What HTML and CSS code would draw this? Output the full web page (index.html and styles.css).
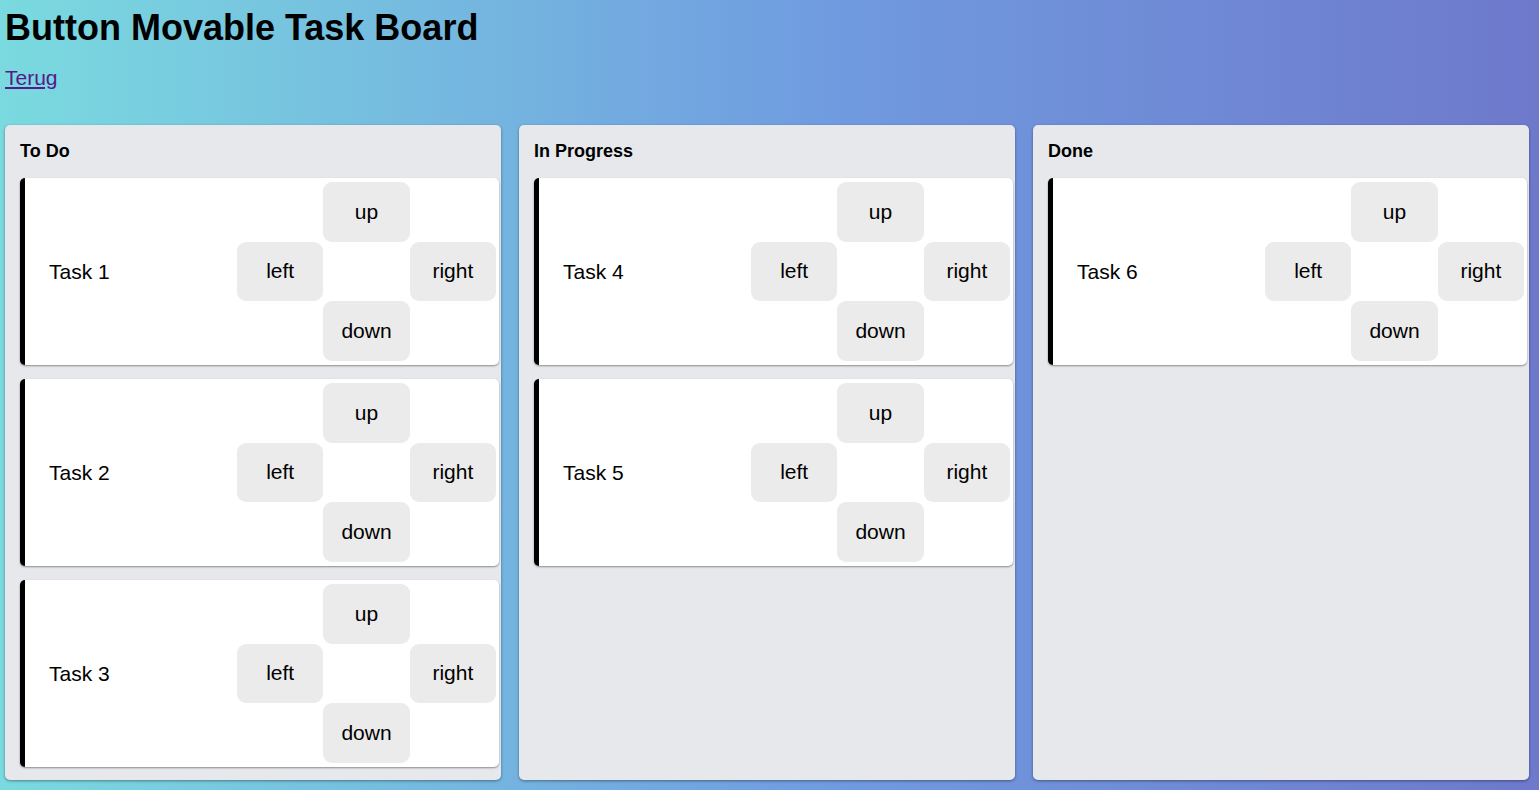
FILE: index.html
```html
<!DOCTYPE html>
<html lang="en">
<head>
<meta charset="utf-8">
<title>Button Movable Task Board</title>
<link rel="stylesheet" href="styles.css">
</head>
<body>
<header class="header">
<h1 class="title">Button Movable Task Board</h1>
<a class="back" href="#">Terug</a>
</header>
<main class="board">
<section class="column">
<h2 class="column-title">To Do</h2>
<ul class="tasks">
<li class="task"><span class="task-name">Task 1</span><div class="controls"><button class="move up">up</button><button class="move left">left</button><button class="move right">right</button><button class="move down">down</button></div></li>
<li class="task"><span class="task-name">Task 2</span><div class="controls"><button class="move up">up</button><button class="move left">left</button><button class="move right">right</button><button class="move down">down</button></div></li>
<li class="task"><span class="task-name">Task 3</span><div class="controls"><button class="move up">up</button><button class="move left">left</button><button class="move right">right</button><button class="move down">down</button></div></li>
</ul>
</section>
<section class="column">
<h2 class="column-title">In Progress</h2>
<ul class="tasks">
<li class="task"><span class="task-name">Task 4</span><div class="controls"><button class="move up">up</button><button class="move left">left</button><button class="move right">right</button><button class="move down">down</button></div></li>
<li class="task"><span class="task-name">Task 5</span><div class="controls"><button class="move up">up</button><button class="move left">left</button><button class="move right">right</button><button class="move down">down</button></div></li>
</ul>
</section>
<section class="column">
<h2 class="column-title">Done</h2>
<ul class="tasks">
<li class="task"><span class="task-name">Task 6</span><div class="controls"><button class="move up">up</button><button class="move left">left</button><button class="move right">right</button><button class="move down">down</button></div></li>
</ul>
</section>
</main>
</body>
</html>
```

FILE: styles.css
```css
* {
  box-sizing: border-box;
  margin: 0;
  padding: 0;
}

html {
  min-height: 100%;
  background: linear-gradient(90deg, #7adadf 0%, #709be0 54%, #6e79cc 100%);
}

body {
  padding: 6px 10px 10px 5px;
  font-family: "Liberation Sans", Arial, sans-serif;
  font-size: 21px;
  line-height: 24px;
  color: #000;
}

.header {
  padding-bottom: 35px;
}

.title {
  margin-bottom: 16px;
  font-size: 36px;
  line-height: 44px;
}

.back {
  display: block;
  width: fit-content;
  color: #551a8b;
}

.board {
  display: grid;
  grid-template-columns: repeat(3, minmax(0, 1fr));
  gap: 18px;
}

.column {
  padding: 14px 2px 13px 15px;
  border-radius: 5px;
  background: #e7e8ec;
  box-shadow: 0 1px 3px rgba(0, 0, 0, 0.4);
}

.column-title {
  margin-bottom: 15px;
  font-size: 18px;
  line-height: 24px;
}

.tasks {
  display: grid;
  gap: 14px;
  list-style: none;
}

.task {
  display: grid;
  grid-template-columns: minmax(0, 1fr) 259px;
  align-items: center;
  padding: 4px 3px 4px 24px;
  border-left: 5px solid #000;
  border-radius: 5px;
  background: #fff;
  box-shadow: 0 1px 2px rgba(0, 0, 0, 0.4);
}

.controls {
  display: grid;
  grid-template-areas: ". up ." "left . right" ". down .";
  grid-template-columns: repeat(3, minmax(0, 1fr));
  grid-template-rows: repeat(3, 1fr);
  min-height: 179px;
}

.move {
  padding: 17px 0;
  border: 0;
  border-radius: 9px;
  background: #ebebeb;
  color: #000;
  font: inherit;
}

.up { grid-area: up; }
.left { grid-area: left; }
.right { grid-area: right; }
.down { grid-area: down; }
```
